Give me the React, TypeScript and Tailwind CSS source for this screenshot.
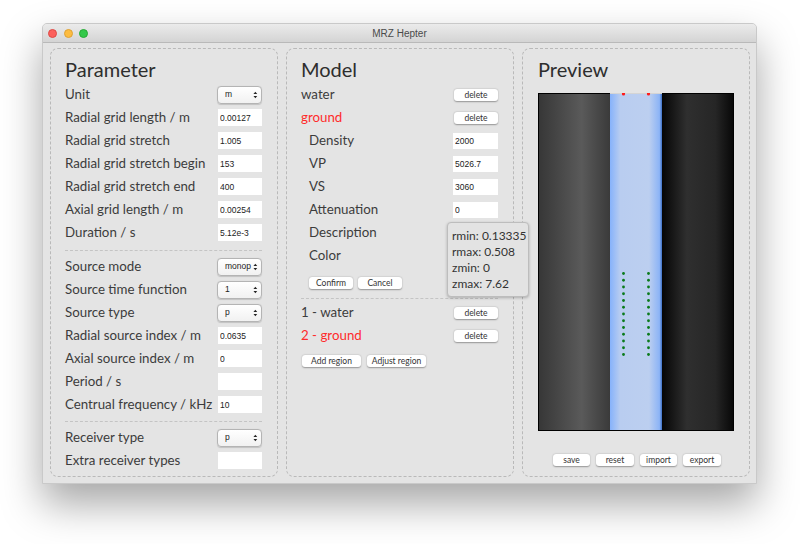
import type { ReactNode } from 'react';

const label = 'text-[13.3px] text-[#3c3c3c] [font-family:Lato,sans-serif]';
const small = '[font-family:"Liberation_Sans",Arial,sans-serif]';

function Field({ value, w = 'w-[44px]', h = 'h-[17px]' }: { value: string; w?: string; h?: string }) {
  return (
    <input
      readOnly
      value={value}
      className={`${w} ${h} bg-white pl-[2px] text-[8.5px] text-[#222] outline-none ${small}`}
    />
  );
}

function Select({ value }: { value: string }) {
  return (
    <div
      className={`flex h-[18px] w-[45px] items-center justify-between rounded-[4px] border border-[#b4b4b4] bg-[linear-gradient(#ffffff,#f1f1f1)] pl-[7px] pr-[3px] text-[8.5px] text-[#222] shadow-[0_0.5px_1px_rgba(0,0,0,0.15)] ${small}`}
    >
      <span className="w-[30px] overflow-hidden whitespace-nowrap">{value}</span>
      <svg width="5" height="8" viewBox="0 0 5 8">
        <path d="M2.5 0.5 L4.5 3 L0.5 3 Z" fill="#222" />
        <path d="M2.5 7.5 L4.5 5 L0.5 5 Z" fill="#222" />
      </svg>
    </div>
  );
}

function Btn({ children, w }: { children: ReactNode; w: string }) {
  return (
    <button
      className={`${w} h-[12px] rounded-[3px] bg-white text-[8.5px] leading-[12px] text-[#333] shadow-[0_0.5px_1.5px_rgba(0,0,0,0.35)] [font-family:Lato,sans-serif]`}
    >
      {children}
    </button>
  );
}

function Row({ name, children, indent, red }: { name: string; children?: ReactNode; indent?: boolean; red?: boolean }) {
  return (
    <div className="flex h-[23px] items-center justify-between">
      <span className={`${label} ${indent ? 'pl-[8px]' : ''} ${red ? 'text-[#ff2b2b]' : ''}`}>{name}</span>
      {children}
    </div>
  );
}

function Heading({ children }: { children: ReactNode }) {
  return (
    <div className="h-[27px] text-[20px] leading-[27px] text-[#2e2e2e] [font-family:Lato,sans-serif]">{children}</div>
  );
}

const panel = 'relative h-[429px] w-[228px] rounded-[8px] border border-dashed border-[#b9b9b9] pt-[7px]';

function Preview() {
  const ys = Array.from({ length: 13 }, (_, i) => 180.5 + i * 6.75);
  return (
    <svg width="196" height="338" viewBox="0 0 196 338" className="block">
      <defs>
        <linearGradient id="lc" x1="0" x2="1" y1="0" y2="0">
          <stop offset="0" stopColor="#373737" />
          <stop offset="0.6" stopColor="#5a5a5a" />
          <stop offset="1" stopColor="#3a3a3a" />
        </linearGradient>
        <linearGradient id="bc" x1="0" x2="1" y1="0" y2="0">
          <stop offset="0" stopColor="#86b2fb" />
          <stop offset="0.2" stopColor="#b9cdf0" />
          <stop offset="0.75" stopColor="#bccff0" />
          <stop offset="0.95" stopColor="#8cb4f6" />
          <stop offset="1" stopColor="#3d6fc4" />
        </linearGradient>
        <linearGradient id="rc" x1="0" x2="1" y1="0" y2="0">
          <stop offset="0" stopColor="#050505" />
          <stop offset="0.35" stopColor="#2f2f2f" />
          <stop offset="0.75" stopColor="#262626" />
          <stop offset="1" stopColor="#080808" />
        </linearGradient>
      </defs>
      <rect x="0" y="0" width="196" height="338" fill="#000" />
      <rect x="1" y="1" width="71" height="336" fill="url(#lc)" />
      <rect x="72" y="0" width="52" height="337" fill="url(#bc)" />
      <rect x="72" y="0" width="52" height="1" fill="#d4d4d4" />
      <rect x="124" y="1" width="71" height="336" fill="url(#rc)" />
      <circle cx="85.5" cy="1" r="1.6" fill="#ff1a1a" />
      <circle cx="110.5" cy="1" r="1.6" fill="#ff1a1a" />
      {ys.map((y) => (
        <g key={y}>
          <circle cx="85.5" cy={y} r="1.4" fill="#0a7a1a" />
          <circle cx="110.5" cy={y} r="1.4" fill="#0a7a1a" />
        </g>
      ))}
    </svg>
  );
}

export default function App() {
  return (
    <div className="h-[544px] w-[800px] overflow-hidden bg-white pl-[42px] pt-[23px]">
      <div className="h-[461px] w-[715px] overflow-hidden rounded-t-[5px] border border-[#c9c9c9] bg-[#e4e4e4] shadow-[0_20px_40px_rgba(0,0,0,0.35)]">
        <div className="relative flex h-[19px] items-center justify-center border-b border-[#b9b9b9] bg-[linear-gradient(#ebebeb,#d4d4d4)]">
          <div className="absolute left-[5px] top-[4.5px] flex gap-[6.5px]">
            <span className="h-[9px] w-[9px] rounded-full border border-[#de4a46] bg-[#fc605c]" />
            <span className="h-[9px] w-[9px] rounded-full border border-[#dea236] bg-[#fdbc40]" />
            <span className="h-[9px] w-[9px] rounded-full border border-[#27aa35] bg-[#34c84a]" />
          </div>
          <span className={`text-[10px] text-[#4a4a4a] ${small}`}>MRZ Hepter</span>
        </div>

        <div className="flex gap-[8px] pl-[7px] pt-[5px]">
          {/* Parameter */}
          <div className={`${panel} pl-[14px] pr-[15px]`}>
            <Heading>Parameter</Heading>
            <Row name="Unit"><Select value="m" /></Row>
            <Row name="Radial grid length /  m"><Field value="0.00127" /></Row>
            <Row name="Radial grid stretch"><Field value="1.005" /></Row>
            <Row name="Radial grid stretch begin"><Field value="153" /></Row>
            <Row name="Radial grid stretch end"><Field value="400" /></Row>
            <Row name="Axial grid length /  m"><Field value="0.00254" /></Row>
            <Row name="Duration / s"><Field value="5.12e-3" /></Row>
            <div className="mb-[4px] mt-[6px] border-t border-dashed border-[#c4c4c4]" />
            <Row name="Source mode"><Select value="monop" /></Row>
            <Row name="Source time function"><Select value="1" /></Row>
            <Row name="Source type"><Select value="p" /></Row>
            <Row name="Radial source index /  m"><Field value="0.0635" /></Row>
            <Row name="Axial source index /  m"><Field value="0" /></Row>
            <Row name="Period / s"><Field value="" /></Row>
            <Row name="Centrual frequency / kHz"><Field value="10" /></Row>
            <div className="mb-[4px] mt-[5px] border-t border-dashed border-[#c4c4c4]" />
            <Row name="Receiver type"><Select value="p" /></Row>
            <Row name="Extra receiver types"><Field value="" /></Row>
          </div>

          {/* Model */}
          <div className={`${panel} pl-[14px] pr-[15px]`}>
            <Heading>Model</Heading>
            <Row name="water"><Btn w="w-[44px]">delete</Btn></Row>
            <Row name="ground" red><Btn w="w-[44px]">delete</Btn></Row>
            <Row name="Density" indent><Field value="2000" w="w-[45px]" h="h-[16px]" /></Row>
            <Row name="VP" indent><Field value="5026.7" w="w-[45px]" h="h-[16px]" /></Row>
            <Row name="VS" indent><Field value="3060" w="w-[45px]" h="h-[16px]" /></Row>
            <Row name="Attenuation" indent><Field value="0" w="w-[45px]" h="h-[16px]" /></Row>
            <Row name="Description" indent />
            <Row name="Color" indent />
            <div className="flex h-[31px] items-center gap-[5px] pl-[8px]">
              <Btn w="w-[44px]">Confirm</Btn>
              <Btn w="w-[44px]">Cancel</Btn>
            </div>
            <div className="mb-[2px] border-t border-dashed border-[#c4c4c4]" />
            <Row name="1 - water"><Btn w="w-[44px]">delete</Btn></Row>
            <Row name="2 - ground" red><Btn w="w-[44px]">delete</Btn></Row>
            <div className="flex h-[28px] items-center gap-[6px] pl-[1px]">
              <Btn w="w-[59px]">Add region</Btn>
              <Btn w="w-[59px]">Adjust region</Btn>
            </div>

            <div className="absolute left-[160px] top-[173px] z-10 flex h-[75px] w-[82px] flex-col justify-center whitespace-nowrap rounded-[4px] border border-[#bdbdbd] bg-[#e3e3e3] pl-[4px] text-[12px] leading-[16px] text-[#333] shadow-[0_1px_3px_rgba(0,0,0,0.25)] [font-family:Lato,sans-serif]">
              <div>rmin: 0.13335</div>
              <div>rmax: 0.508</div>
              <div>zmin: 0</div>
              <div>zmax: 7.62</div>
            </div>
          </div>

          {/* Preview */}
          <div className={`${panel} pl-[15px] pr-[15px]`}>
            <Heading>Preview</Heading>
            <div className="mt-[10px]">
              <Preview />
            </div>
            <div className="mt-[23px] flex justify-center gap-[6px] pl-[2px]">
              <Btn w="w-[37px]">save</Btn>
              <Btn w="w-[38px]">reset</Btn>
              <Btn w="w-[37px]">import</Btn>
              <Btn w="w-[38px]">export</Btn>
            </div>
          </div>
        </div>
      </div>
    </div>
  );
}
